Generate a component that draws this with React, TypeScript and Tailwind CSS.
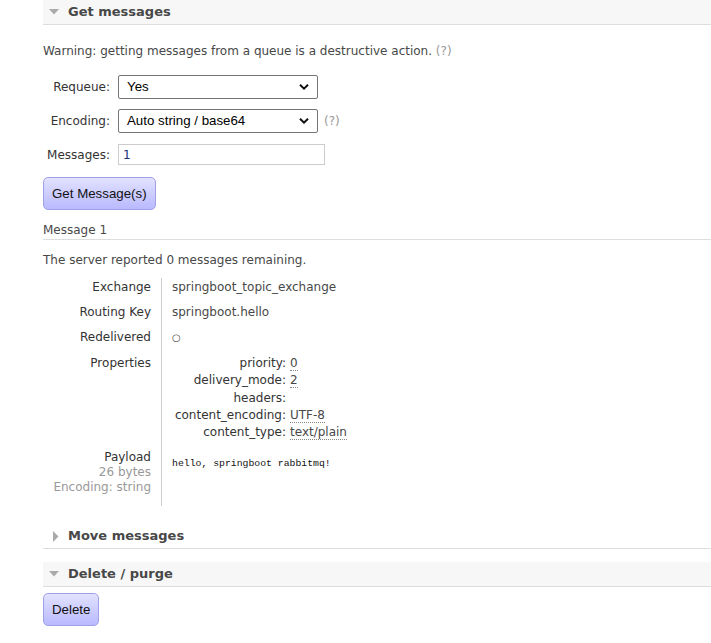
import React from "react";

const font = { fontFamily: '"DejaVu Sans", Verdana, sans-serif' };

function Chevron() {
  return (
    <svg width="10" height="7" viewBox="0 0 10 7" className="absolute right-[8px] top-1/2 -translate-y-1/2">
      <path d="M1 1.2 L5 5.2 L9 1.2" fill="none" stroke="#111" strokeWidth="2" />
    </svg>
  );
}

function Select({ value }: { value: string }) {
  return (
    <div className="relative flex h-[24px] w-[200px] items-center rounded-[2px] border border-[#767676] bg-white pl-[8px] font-['Liberation_Sans',Arial,sans-serif] text-[13.3px] text-black">
      {value}
      <Chevron />
    </div>
  );
}

function SectionHeader({ title, open, shaded }: { title: string; open: boolean; shaded: boolean }) {
  return (
    <div
      className={`flex h-[25px] items-center border-b border-[#dddddd] pl-[6px] ${shaded ? "bg-[#f7f7f7]" : "bg-white"}`}
    >
      <span className="flex w-[19px] items-center">
        {open ? (
          <svg width="10" height="6" viewBox="0 0 10 6">
            <path d="M0 0 L10 0 L5 5.5 Z" fill="#aaaaaa" />
          </svg>
        ) : (
          <svg width="6" height="11" viewBox="0 0 6 11" className="ml-[4px]">
            <path d="M0 0 L5.5 5.5 L0 11 Z" fill="#aaaaaa" />
          </svg>
        )}
      </span>
      <span className="text-[13px] font-bold text-[#484848]">{title}</span>
    </div>
  );
}

function Button({ label }: { label: string }) {
  return (
    <button className="h-[33px] rounded-[5px] border border-[#a0a0e8] bg-gradient-to-b from-[#e2e2ff] to-[#b9b9ff] px-[8px] font-['Liberation_Sans',Arial,sans-serif] text-[13.3px] text-[#111]">
      {label}
    </button>
  );
}

function Abbr({ children }: { children: React.ReactNode }) {
  return <span className="border-b border-dotted border-[#888]">{children}</span>;
}

function Row({ label, children, pad }: { label: React.ReactNode; children: React.ReactNode; pad: string }) {
  return (
    <div className="flex">
      <div className={`w-[119px] shrink-0 border-r border-[#cccccc] pr-[10px] text-right text-[#333] ${pad}`}>{label}</div>
      <div className={`pl-[10px] text-[#484848] ${pad}`}>{children}</div>
    </div>
  );
}

export default function App() {
  const props: [string, React.ReactNode][] = [
    ["priority:", <Abbr>0</Abbr>],
    ["delivery_mode:", <Abbr>2</Abbr>],
    ["headers:", null],
    ["content_encoding:", <Abbr>UTF-8</Abbr>],
    ["content_type:", <Abbr>text/plain</Abbr>],
  ];
  return (
    <div className="min-h-[643px] bg-white pl-[43px] text-[12px] text-[#484848]" style={font}>
      <SectionHeader title="Get messages" open shaded />
      <p className="mt-[18px] leading-[16px]">
        Warning: getting messages from a queue is a destructive action. <span className="text-[#999]">(?)</span>
      </p>
      <div className="mt-[16px] flex flex-col gap-[10px]">
        <div className="flex items-center">
          <span className="w-[67px] text-right text-[#333]">Requeue:</span>
          <span className="ml-[8px]">
            <Select value="Yes" />
          </span>
        </div>
        <div className="flex items-center">
          <span className="w-[67px] text-right text-[#333]">Encoding:</span>
          <span className="ml-[8px]">
            <Select value="Auto string / base64" />
          </span>
          <span className="ml-[6px] text-[#999]">(?)</span>
        </div>
        <div className="mt-[1px] flex items-center">
          <span className="w-[67px] text-right text-[#333]">Messages:</span>
          <span className="ml-[8px] flex h-[21px] w-[207px] items-center border border-[#cccccc] pl-[4px] text-[#1b2f7a]">1</span>
        </div>
      </div>
      <div className="mt-[12px]">
        <Button label="Get Message(s)" />
      </div>
      <div className="mt-[12px] border-b border-[#dddddd] pb-[1px] leading-[16px]">Message 1</div>
      <p className="mt-[12px] leading-[16px]">
        The server reported 0 messages remaining.
      </p>
      <div className="mt-[10px] flex flex-col leading-[16px]">
        <Row label="Exchange" pad="pt-[1px] pb-[9px]">springboot_topic_exchange</Row>
        <Row label="Routing Key" pad="pb-[9px]">springboot.hello</Row>
        <Row label="Redelivered" pad="pb-[9px]">
          <span className="text-[10px]">○</span>
        </Row>
        <Row label="Properties" pad="pb-[10px]">
          <div className="flex flex-col gap-[1.3px]">
            {props.map(([k, v]) => (
              <div key={k} className="flex">
                <span className="w-[114px] text-right text-[#333]">{k}</span>
                <span className="ml-[4px]">{v}</span>
              </div>
            ))}
          </div>
        </Row>
        <Row
          label={
            <div className="leading-[15px]">
              <div>Payload</div>
              <div className="text-[#999]">26 bytes</div>
              <div className="text-[#999]">Encoding: string</div>
            </div>
          }
          pad="pb-[11px]"
        >
          <pre className="pt-[6px] font-['Liberation_Mono',monospace] text-[9.8px] text-[#111]">hello, springboot rabbitmq!</pre>
        </Row>
      </div>
      <div className="mt-[18px]">
        <SectionHeader title="Move messages" open={false} shaded={false} />
      </div>
      <div className="mt-[13px]">
        <SectionHeader title="Delete / purge" open shaded />
      </div>
      <div className="mt-[6px]">
        <Button label="Delete" />
      </div>
    </div>
  );
}
